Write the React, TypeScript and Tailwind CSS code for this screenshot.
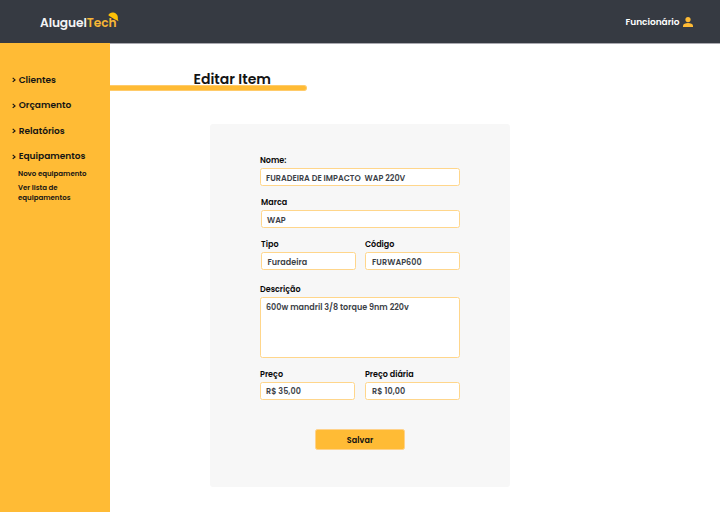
import { useLayoutEffect, useRef, useState } from 'react';
import clsx from 'clsx';

/** Inline text whose tracking is adjusted so that it spans the given width. */
function Fit({ text, width, className }: { text: string; width: number; className?: string }) {
  const ref = useRef<HTMLSpanElement>(null);
  const [spacing, setSpacing] = useState(0);
  useLayoutEffect(() => {
    if (ref.current) {
      const natural = ref.current.getBoundingClientRect().width;
      setSpacing((width - natural) / (text.length - 1));
    }
  }, [text, width]);
  return (
    <span ref={ref} style={{ letterSpacing: spacing }} className={clsx('inline-block whitespace-pre', className)}>
      {text}
    </span>
  );
}

function NavItem({ text, width }: { text: string; width: number }) {
  return (
    <a className="flex h-[25.5px] items-center text-[9px] leading-none font-semibold">
      <svg viewBox="0 0 4 6" className="mr-[2.7px] h-[6px] w-[4px]" fill="none" stroke="currentColor" strokeWidth="1.2">
        <path d="M.7 .9 3 2.9 .7 4.9" />
      </svg>
      <Fit text={text} width={width} />
    </a>
  );
}

interface FieldProps {
  label: string;
  labelWidth: number;
  value: string;
  valueWidth: number;
  className?: string;
  boxClass?: string;
}

function Field({ label, labelWidth, value, valueWidth, className, boxClass }: FieldProps) {
  return (
    <div className={className}>
      <div className="flex h-[14px] items-start text-[8px] leading-[14px] font-semibold text-[#080808]">
        <Fit text={label} width={labelWidth} />
      </div>
      <div
        className={clsx(
          'rounded-[2.5px] border border-[#ffd68b] bg-white text-[8px] font-semibold text-[#3c3f47]',
          boxClass ?? 'h-[18px] pl-[5px] leading-[19px]',
        )}
      >
        <Fit text={value} width={valueWidth} />
      </div>
    </div>
  );
}

export default function App() {
  return (
    <div className="flex h-[512px] w-[720px] flex-col overflow-hidden bg-white font-['Poppins','Inter',sans-serif] text-[#141414]">
      <header className="flex h-[43px] shrink-0 items-center justify-between bg-[#363a42] pr-[27px] pl-[40px]">
        <div className="relative mt-[3px] flex text-[12.2px] leading-none font-semibold">
          <Fit text="Aluguel" width={46.8} className="text-[#f4f4f5]" />
          <Fit text="Tech" width={29.8} className="text-[#f8b636]" />
          <svg viewBox="0 0 11 10" className="absolute -top-[4.5px] left-[68px] h-[10px] w-[11px]" fill="#fdc007">
            <path d="M.3 3.2C1.2 1.2 3.2.3 5.3.6 8.6 1 10.4 3.9 9.8 7L10.5 9.2 8.2 8C6 7.2 3.4 5 .3 3.2Z" />
          </svg>
        </div>
        <div className="flex items-center text-[9px] leading-none font-semibold text-white">
          <Fit text="Funcionário" width={54} className="mt-[2px]" />
          <svg viewBox="0 0 10 10" className="ml-[3.5px] h-[10px] w-[10px]" fill="#ffbb35">
            <circle cx="5" cy="2.6" r="2.6" />
            <path d="M0 10V8.8C0 6.9 2.5 6 5 6S10 6.9 10 8.8V10Z" />
          </svg>
        </div>
      </header>

      <div className="flex min-h-0 flex-1">
        <aside className="w-[110px] shrink-0 bg-[#ffbb35] pt-[24.5px] pl-[12px]">
          <nav>
            <NavItem text="Clientes" width={37.3} />
            <NavItem text="Orçamento" width={52.5} />
            <NavItem text="Relatórios" width={46} />
            <NavItem text="Equipamentos" width={66.7} />
          </nav>
          <div className="flex flex-col pl-[6px] text-[7px] leading-[10.5px] font-semibold">
            <Fit text="Novo equipamento" width={68.5} className="mt-[-1px] mb-[3.5px] self-start" />
            <Fit text="Ver lista de" width={39.7} className="self-start" />
            <Fit text="equipamentos" width={52.5} className="self-start" />
          </div>
        </aside>

        <main className="flex-1 border-t border-[#aaa9b0]">
          <h1 className="mt-[27px] flex h-[14px] items-start pl-[83.5px] text-[14px] leading-[16px] font-semibold">
            <Fit text="Editar Item" width={77.5} className="relative" />
          </h1>
          <div className="h-[6px] w-[196.5px] rounded-r-full border-y border-r border-[#ffcb6a] bg-[#ffbb35]" />

          <form className="mt-[33px] ml-[100px] h-[363px] w-[300px] rounded-[3px] bg-[#f7f7f7] px-[50px] pt-[30px]">
            <Field label="Nome:" labelWidth={26.3} value="FURADEIRA DE IMPACTO  WAP 220V" valueWidth={139.3} />
            <Field label="Marca" labelWidth={26.3} value="WAP" valueWidth={18.7} className="mt-[10px] ml-px" />
            <div className="mt-[10px] flex justify-between pl-px">
              <Field label="Tipo" labelWidth={17.7} value="Furadeira" valueWidth={39.6} className="w-[95px]" boxClass="h-[18px] pl-[5.5px] leading-[19px]" />
              <Field label="Código" labelWidth={29.3} value="FURWAP600" valueWidth={49.7} className="w-[95px]" boxClass="h-[18px] pl-[6px] leading-[19px]" />
            </div>
            <Field
              label="Descrição"
              labelWidth={40.6}
              value="600w mandril 3/8 torque 9nm 220v"
              valueWidth={142.8}
              className="mt-[13px]"
              boxClass="h-[61px] pl-[5px] leading-[19px]"
            />
            <div className="mt-[10px] flex justify-between">
              <Field label="Preço" labelWidth={23} value="R$ 35,00" valueWidth={34.8} className="w-[95px]" boxClass="h-[18px] pl-[5px] leading-[17px]" />
              <Field label="Preço diária" labelWidth={48.7} value="R$ 10,00" valueWidth={33.2} className="w-[95px]" boxClass="h-[18px] pl-[6px] leading-[17px]" />
            </div>
            <button
              type="button"
              className="mx-auto mt-[29px] flex h-[21px] w-[90px] items-center justify-center rounded-[2.5px] border border-[#ffd28a] bg-[#ffbb35] pt-[2px] text-[8px] leading-none font-semibold text-[#111]"
            >
              <Fit text="Salvar" width={26.3} />
            </button>
          </form>
        </main>
      </div>
    </div>
  );
}
